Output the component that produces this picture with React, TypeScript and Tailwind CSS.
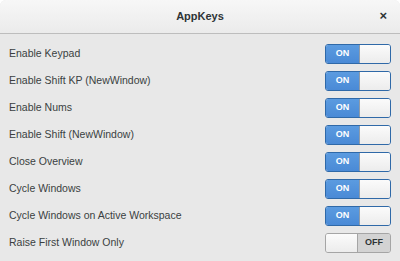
import React from "react";

const rows: [string, boolean][] = [
  ["Enable Keypad", true],
  ["Enable Shift KP (NewWindow)", true],
  ["Enable Nums", true],
  ["Enable Shift (NewWindow)", true],
  ["Close Overview", true],
  ["Cycle Windows", true],
  ["Cycle Windows on Active Workspace", true],
  ["Raise First Window Only", false],
];

function Switch({ on }: { on: boolean }) {
  if (on) {
    return (
      <div className="flex w-[66px] h-[20px] rounded-[3px] border border-[#2f69a8] overflow-hidden">
        <div className="w-[33px] h-full bg-gradient-to-b from-[#5b9be0] to-[#4a8ad6] flex items-center justify-center text-white text-[9px] font-bold">
          ON
        </div>
        <div className="flex-1 h-full bg-gradient-to-b from-[#fbfbfb] to-[#ececec] border-l border-[#8f9ba8]" />
      </div>
    );
  }
  return (
    <div className="flex w-[66px] h-[20px] rounded-[3px] border border-[#a5a5a5] overflow-hidden">
      <div className="w-[32px] h-full bg-gradient-to-b from-[#fbfbfb] to-[#ececec] border-r border-[#a5a5a5]" />
      <div className="flex-1 h-full bg-[#d3d3d3] flex items-center justify-center text-[#2e3436] text-[9px] font-bold">
        OFF
      </div>
    </div>
  );
}

export default function App() {
  return (
    <div
      className="w-[400px] h-[261px] bg-[#e8e8e8] overflow-hidden rounded-t-[6px]"
      style={{ fontFamily: '"Liberation Sans", Arial, sans-serif' }}
    >
      <div className="h-[34px] bg-gradient-to-b from-[#f7f7f7] to-[#ebebeb] border-b border-[#bdbdbd] flex items-center relative">
        <div className="flex-1 text-center text-[11px] font-bold text-[#2e3436]">AppKeys</div>
        <div className="absolute right-[13px] top-[9px] text-[13px] font-bold text-[#2e3436] leading-none">×</div>
      </div>
      <div className="pt-[6px] px-[9px]">
        {rows.map(([label, on]) => (
          <div key={label} className="h-[27px] flex items-center justify-between">
            <span className="text-[10.5px] text-[#3a3f41]">{label}</span>
            <Switch on={on} />
          </div>
        ))}
      </div>
    </div>
  );
}
